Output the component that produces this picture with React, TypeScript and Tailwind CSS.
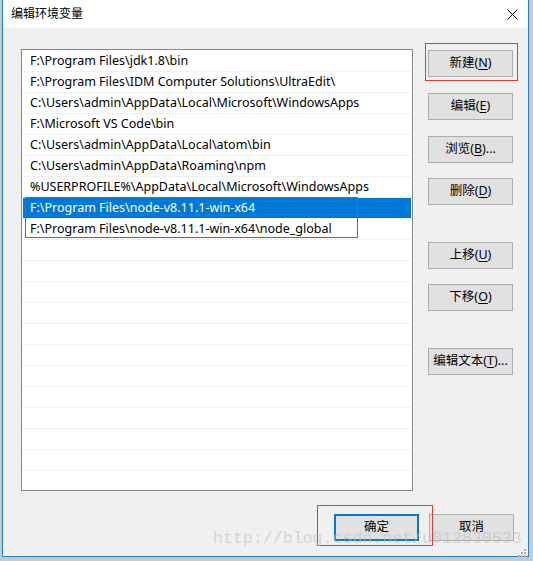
import React from "react";

const paths = [
  "F:\\Program Files\\jdk1.8\\bin",
  "F:\\Program Files\\IDM Computer Solutions\\UltraEdit\\",
  "C:\\Users\\admin\\AppData\\Local\\Microsoft\\WindowsApps",
  "F:\\Microsoft VS Code\\bin",
  "C:\\Users\\admin\\AppData\\Local\\atom\\bin",
  "C:\\Users\\admin\\AppData\\Roaming\\npm",
  "%USERPROFILE%\\AppData\\Local\\Microsoft\\WindowsApps",
  "F:\\Program Files\\node-v8.11.1-win-x64",
  "F:\\Program Files\\node-v8.11.1-win-x64\\node_global",
];

const rows = [...paths, ...Array(12).fill("")];

function Btn({ label, hot, suffix = "", className = "" }: { label: string; hot: string; suffix?: string; className?: string }) {
  return (
    <div
      className={`w-[85px] h-[27px] flex items-center justify-center border border-[#adadad] bg-[#e1e1e1] text-[12.5px] text-black ${className}`}
    >
      <span>
        {label}(<span className="underline underline-offset-2">{hot}</span>){suffix}
      </span>
    </div>
  );
}

export default function App() {
  return (
    <div
      className="relative w-[533px] h-[561px] bg-[#c9c9c9] overflow-hidden"
      style={{ fontFamily: '"Noto Sans", "Noto Sans CJK SC", sans-serif' }}
    >
      <div className="ml-[2px] w-[527px] h-[557px] border-x border-b border-[#1883d7] bg-[#f0f0f0] flex flex-col">
        {/* title bar */}
        <div className="h-[28px] bg-white flex items-center justify-between pl-[8px] pr-[10px] shrink-0">
          <span className="text-[12px] text-black">编辑环境变量</span>
          <svg width="11" height="11" viewBox="0 0 11 11">
            <path d="M0.5 0.5 L10.5 10.5 M10.5 0.5 L0.5 10.5" stroke="#000" strokeWidth="1" />
          </svg>
        </div>

        <div className="flex pl-[18px] pt-[21px]">
          {/* list */}
          <div className="w-[392px] h-[442px] border border-[#828790] bg-white px-[1px] pt-[1px] overflow-hidden">
            {rows.map((p, i) => (
              <div
                key={i}
                className={`h-[21px] border-b border-[#f0f0f0] flex items-center pl-[7px] pt-[1px] text-[12.5px] whitespace-nowrap ${
                  i === 7 ? "bg-[#0078d7] text-white" : "text-black"
                }`}
              >
                {p}
              </div>
            ))}
          </div>

          {/* buttons */}
          <div className="flex flex-col ml-[15px] pt-[1px]">
            <Btn label="新建" hot="N" />
            <Btn label="编辑" hot="E" className="mt-[16px]" />
            <Btn label="浏览" hot="B" suffix="..." className="mt-[16px]" />
            <Btn label="删除" hot="D" className="mt-[15px]" />
            <Btn label="上移" hot="U" className="mt-[37px]" />
            <Btn label="下移" hot="O" className="mt-[15px]" />
            <Btn label="编辑文本" hot="T" suffix="..." className="mt-[37px]" />
          </div>
        </div>

        {/* bottom buttons */}
        <div className="flex justify-end gap-[10px] pr-[14px] mt-[23px]">
          <div className="w-[85px] h-[27px] flex items-center justify-center border-2 border-[#0078d7] bg-[#e1e1e1] text-[12.5px]">
            确定
          </div>
          <div className="w-[85px] h-[27px] flex items-center justify-center border border-[#adadad] bg-[#e1e1e1] text-[12.5px]">
            取消
          </div>
        </div>
      </div>

      {/* resize grip */}
      <svg className="absolute left-[518px] top-[549px]" width="8" height="8" viewBox="0 0 8 8">
        <rect x="6" y="0" width="2" height="2" fill="#b0b0b0" />
        <rect x="3" y="3" width="2" height="2" fill="#b0b0b0" />
        <rect x="6" y="3" width="2" height="2" fill="#b0b0b0" />
        <rect x="0" y="6" width="2" height="2" fill="#b0b0b0" />
        <rect x="3" y="6" width="2" height="2" fill="#b0b0b0" />
        <rect x="6" y="6" width="2" height="2" fill="#b0b0b0" />
      </svg>

      {/* annotation boxes */}
      <div className="absolute left-[425px] top-[43px] w-[93px] h-[38px] border border-[#e53935]" />
      <div className="absolute left-[25px] top-[197px] w-[333px] h-[41px] border border-[#e53935]" />
      <div className="absolute left-[317px] top-[505px] w-[116px] h-[41px] border border-[#e53935]" />

      {/* watermark */}
      <div
        className="absolute left-[213px] top-[527px] text-[16.6px] text-[#c0c0c0]/60 whitespace-nowrap pointer-events-none"
        style={{ fontFamily: '"Liberation Mono", monospace' }}
      >
        http://blog.csdn.net/u012830533
      </div>
    </div>
  );
}
